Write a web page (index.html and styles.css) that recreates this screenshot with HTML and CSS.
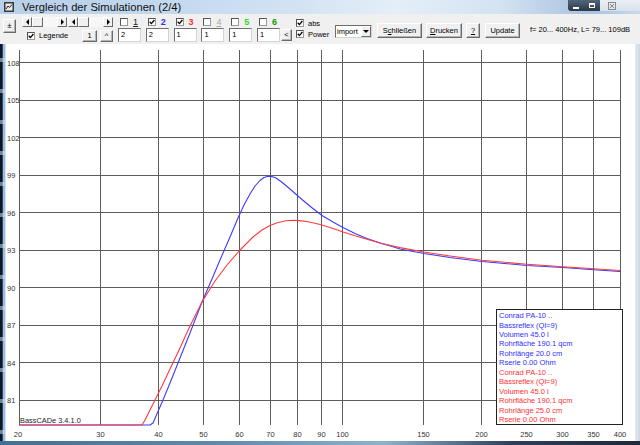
FILE: index.html
```html
<!DOCTYPE html>
<html>
<head>
<meta charset="utf-8">
<title>Vergleich der Simulationen</title>
<link rel="stylesheet" href="styles.css">
</head>
<body>
<div class="window">
  <div class="titlebar">
    <svg class="appicon" viewBox="0 0 10 10"><rect x="0" y="0" width="10" height="10" fill="#3a3a3a"/><rect x="1.5" y="1.5" width="7" height="7" fill="#e8e8e8"/><path d="M2 7 L4 4 L5.5 5.5 L8 2.5" stroke="#222" stroke-width="1" fill="none"/></svg>
    <span class="title">Vergleich der Simulationen (2/4)</span>
    <div class="caption">
      <div class="cap-mm"><span class="cap-min"></span><span class="cap-max"></span></div>
      <div class="cap-close"><svg viewBox="0 0 8 8"><rect x="0.5" y="0.5" width="7" height="7" fill="none" stroke="#8a8a8a"/><path d="M2 2 L6 6 M6 2 L2 6" stroke="#8a8a8a" stroke-width="1"/></svg></div>
    </div>
  </div>

  <div class="toolbar">
    <button class="btn btn-pm">±</button>
    <div class="nav">
      <div class="nav-row1">
        <div class="scroll"><span class="sb-arrow"><i class="tri-l"></i></span><span class="sb-thumb"></span><span class="sb-track"></span><span class="sb-arrow"><i class="tri-r"></i></span></div>
        <div class="scroll"><span class="sb-arrow"><i class="tri-l"></i></span><span class="sb-thumb"></span><span class="sb-track"></span><span class="sb-arrow"><i class="tri-r"></i></span></div>
      </div>
      <div class="nav-row2">
        <label class="legende"><span class="chk"><svg viewBox="0 0 6 6"><path d="M0.7 2.8 L2.4 4.6 L5.4 1" stroke="#000" stroke-width="1.3" fill="none"/></svg></span>Legende</label>
        <button class="btn btn-one">1</button>
        <button class="btn btn-up">^</button>
      </div>
    </div>

    <div class="channels">
      <div class="ch-head"><span class="chk"></span><span class="num n1">1</span></div>
      <div class="ch-head"><span class="chk"><svg viewBox="0 0 6 6"><path d="M0.7 2.8 L2.4 4.6 L5.4 1" stroke="#000" stroke-width="1.3" fill="none"/></svg></span><span class="num n2">2</span></div>
      <div class="ch-head"><span class="chk"><svg viewBox="0 0 6 6"><path d="M0.7 2.8 L2.4 4.6 L5.4 1" stroke="#000" stroke-width="1.3" fill="none"/></svg></span><span class="num n3">3</span></div>
      <div class="ch-head"><span class="chk"></span><span class="num n4">4</span></div>
      <div class="ch-head"><span class="chk"></span><span class="num n5">5</span></div>
      <div class="ch-head"><span class="chk"></span><span class="num n6">6</span></div>
      <div class="tb">2</div>
      <div class="tb">2</div>
      <div class="tb">1</div>
      <div class="tb">1</div>
      <div class="tb">1</div>
      <div class="tb">1</div>
    </div>

    <button class="btn btn-lt">&lt;</button>

    <div class="opts">
      <label class="opt"><span class="chk"><svg viewBox="0 0 6 6"><path d="M0.7 2.8 L2.4 4.6 L5.4 1" stroke="#000" stroke-width="1.3" fill="none"/></svg></span>abs</label>
      <label class="opt"><span class="chk"><svg viewBox="0 0 6 6"><path d="M0.7 2.8 L2.4 4.6 L5.4 1" stroke="#000" stroke-width="1.3" fill="none"/></svg></span>Power</label>
    </div>

    <div class="combo"><span class="combo-text">import</span><span class="combo-btn"><i class="tri-d"></i></span></div>

    <button class="btn btn-cmd b-close">S<u>c</u>hließen</button>
    <button class="btn btn-cmd b-print"><u>D</u>rucken</button>
    <button class="btn btn-cmd b-help"><u>?</u></button>
    <button class="btn btn-cmd b-update">Update</button>

    <span class="range">f= 20... 400Hz, L= 79... 109dB</span>
  </div>

  <div class="main">
    <div class="frame-l"></div>
    <div class="chart">
      <svg class="plot" width="629" height="397" viewBox="6 44 629 397">
        <g class="grid" stroke="#5c5c5c" stroke-width="1" shape-rendering="crispEdges" fill="none">
          <path d="M19.5 50V425 M100.5 50V425 M158.5 50V425 M203.5 50V425 M239.5 50V425 M270.5 50V425 M297.5 50V425 M321.5 50V425 M342.5 50V425 M423.5 50V425 M481.5 50V425 M526.5 50V425 M562.5 50V425 M593.5 50V425 M620.5 50V425"/>
          <path d="M19 62.5H621 M19 100.5H621 M19 137.5H621 M19 175.5H621 M19 212.5H621 M19 250.5H621 M19 287.5H621 M19 325.5H621 M19 362.5H621 M19 400.5H621"/>
        </g>
        <g class="ylab" font-family="Liberation Sans, Arial, sans-serif" font-size="7.5" fill="#333">
          <text x="7" y="65.5">108</text>
          <text x="7" y="103">105</text>
          <text x="7" y="140.5">102</text>
          <text x="7" y="178">99</text>
          <text x="7" y="215.5">96</text>
          <text x="7" y="253">93</text>
          <text x="7" y="290.5">90</text>
          <text x="7" y="328">87</text>
          <text x="7" y="365.5">84</text>
          <text x="7" y="403">81</text>
        </g>
        <g class="xlab" font-family="Liberation Sans, Arial, sans-serif" font-size="7.5" fill="#333" text-anchor="middle">
          <text x="18" y="437">20</text>
          <text x="100.5" y="437">30</text>
          <text x="158.5" y="437">40</text>
          <text x="203.5" y="437">50</text>
          <text x="239.5" y="437">60</text>
          <text x="270.5" y="437">70</text>
          <text x="297.5" y="437">80</text>
          <text x="321.5" y="437">90</text>
          <text x="342.5" y="437">100</text>
          <text x="423.5" y="437">150</text>
          <text x="481.5" y="437">200</text>
          <text x="526.5" y="437">250</text>
          <text x="562.5" y="437">300</text>
          <text x="593.5" y="437">350</text>
          <text x="620" y="437">400</text>
        </g>
        <polyline fill="none" stroke="#3b3bff" stroke-width="1.1" stroke-linejoin="round" points="19,425 150,425 153,423 156,416 163,400 170,383 180,358 190,333 202,302 212,279 220,260 230,237 238,218 244,205 250,194 255,186 260,180.5 264,177.5 268,176.3 272,176.6 276,178 281,181.5 287,186.5 294,192.5 302,199.5 311,207 322,215.5 333,222 343,227.5 355,233.5 367,238.5 380,243 392,246.5 400,249 424,253.5 450,257.5 482,261.5 527,265.5 563,267.5 590,269.5 620,271.5"/>
        <polyline fill="none" stroke="#ff3b3b" stroke-width="1.1" stroke-linejoin="round" points="19,425 142,425 144.5,421 148,414 155,400 162,386 170,369 180,348 190,326 202,302 215,281 227,265 240,250 253,237 262,230 270,225.5 278,222.5 286,220.8 293,220.3 300,220.6 308,221.8 316,223.5 322,225 333,228.5 343,232 355,235.8 367,239.3 380,243 392,245.8 400,247.6 424,252 450,256 482,260.3 527,264.3 563,266.7 590,268.5 620,270.5"/>
        <text x="20" y="423" font-family="Liberation Sans, Arial, sans-serif" font-size="7.4" fill="#222">BassCADe 3.4.1.0</text>
        <rect x="496.5" y="309.5" width="126" height="115" fill="#fff" stroke="#222" stroke-width="1" shape-rendering="crispEdges"/>
        <g font-family="Liberation Sans, Arial, sans-serif" font-size="7.5">
          <g fill="#3030ff">
            <text x="499" y="318">Conrad PA-10 ..</text>
            <text x="499" y="327.5">Bassreflex (Ql=9)</text>
            <text x="499" y="337">Volumen 45.0 l</text>
            <text x="499" y="346.4">Rohrfläche 190.1 qcm</text>
            <text x="499" y="355.8">Rohrlänge 20.0 cm</text>
            <text x="499" y="365.3">Rserie 0.00 Ohm</text>
          </g>
          <g fill="#ff3030">
            <text x="499" y="374.7">Conrad PA-10 ..</text>
            <text x="499" y="384.2">Bassreflex (Ql=9)</text>
            <text x="499" y="393.6">Volumen 45.0 l</text>
            <text x="499" y="403">Rohrfläche 190.1 qcm</text>
            <text x="499" y="412.5">Rohrlänge 25.0 cm</text>
            <text x="499" y="422">Rserie 0.00 Ohm</text>
          </g>
        </g>
      </svg>
    </div>
    <div class="frame-r"></div>
  </div>
  <div class="frame-b"></div>
</div>
</body>
</html>
```

FILE: styles.css
```css
html, body {
  margin: 0;
  padding: 0;
}
body {
  width: 640px;
  height: 445px;
  overflow: hidden;
  background: #f0f0f0;
  font-family: "Liberation Sans", Arial, sans-serif;
  font-size: 7.5px;
  color: #000;
}
.window {
  width: 640px;
  height: 445px;
  display: flex;
  flex-direction: column;
}

/* ---------- title bar ---------- */
.titlebar {
  height: 14px;
  flex: none;
  display: flex;
  align-items: center;
  background: linear-gradient(90deg, #b7cfe8 0%, #c3d8ee 25%, #d2e2f3 45%, #e4eef8 62%, #d4e3f2 78%, #a8c2de 92%, #c9d9ea 100%);
}
.appicon {
  width: 10px;
  height: 10px;
  margin-left: 4px;
  flex: none;
}
.title {
  margin-left: 8px;
  font-family: "Liberation Sans", Arial, sans-serif;
  font-size: 11.2px;
  line-height: 14px;
  color: #111;
  white-space: nowrap;
}
.caption {
  margin-left: auto;
  align-self: flex-start;
  display: flex;
  height: 12px;
}
.cap-mm {
  width: 32px;
  height: 11px;
  display: flex;
  align-items: center;
  justify-content: space-around;
  background: linear-gradient(180deg, #52657a, #2c3a4a);
  border-radius: 0 0 0 3px;
}
.cap-min {
  width: 6px;
  height: 2px;
  margin-top: 4px;
  background: #fff;
}
.cap-max {
  width: 6px;
  height: 5px;
  border: 1px solid #fff;
  border-top-width: 2px;
  box-sizing: border-box;
}
.cap-close {
  width: 40px;
  height: 11px;
  display: flex;
  align-items: center;
  justify-content: flex-start;
  padding-left: 8px;
  box-sizing: border-box;
  background: linear-gradient(180deg, #e9eef3, #d8e2ec);
}
.cap-close svg {
  width: 8px;
  height: 8px;
}

/* ---------- toolbar ---------- */
.toolbar {
  height: 30px;
  flex: none;
  display: flex;
  align-items: flex-start;
  background: #f0f0f0;
}
.btn {
  box-sizing: border-box;
  margin: 0;
  padding: 0;
  font-family: "Liberation Sans", Arial, sans-serif;
  font-size: 7.5px;
  line-height: 1;
  color: #000;
  background: #f0f0f0;
  border: 1px solid;
  border-color: #ffffff #6a6a6a #6a6a6a #ffffff;
  box-shadow: inset -1px -1px 0 #b4b4b4;
  display: flex;
  align-items: center;
  justify-content: center;
  flex: none;
}
.btn u {
  text-decoration: underline;
}
.btn-pm {
  width: 13px;
  height: 14px;
  margin: 5px 0 0 3px;
  font-size: 8px;
}
.nav {
  width: 91px;
  margin-left: 6px;
  display: flex;
  flex-direction: column;
  flex: none;
}
.nav-row1 {
  margin-top: 3px;
  height: 10px;
  display: flex;
  gap: 1px;
}
.scroll {
  width: 45px;
  height: 10px;
  display: flex;
}
.sb-arrow, .sb-thumb {
  box-sizing: border-box;
  width: 10px;
  height: 10px;
  background: #f0f0f0;
  border: 1px solid;
  border-color: #ffffff #6a6a6a #6a6a6a #ffffff;
  display: flex;
  align-items: center;
  justify-content: center;
  flex: none;
}
.sb-thumb {
  width: 11px;
}
.sb-track {
  flex: 1;
  height: 10px;
  background: #f7f7f7;
}
.tri-l, .tri-r, .tri-d {
  display: block;
  width: 0;
  height: 0;
}
.tri-l {
  border-top: 3px solid transparent;
  border-bottom: 3px solid transparent;
  border-right: 3px solid #000;
}
.tri-r {
  border-top: 3px solid transparent;
  border-bottom: 3px solid transparent;
  border-left: 3px solid #000;
}
.tri-d {
  border-left: 3px solid transparent;
  border-right: 3px solid transparent;
  border-top: 3px solid #000;
}
.nav-row2 {
  margin-top: 2px;
  height: 13px;
  display: flex;
  align-items: center;
}
.legende {
  width: 60px;
  padding-left: 5px;
  box-sizing: border-box;
  display: flex;
  align-items: center;
  gap: 4px;
  font-size: 7.5px;
}
.btn-one {
  width: 15px;
  height: 12px;
}
.btn-up {
  width: 13px;
  height: 12px;
  margin-left: 3px;
}
.chk {
  box-sizing: border-box;
  width: 8px;
  height: 8px;
  flex: none;
  background: #fff;
  border: 1px solid;
  border-color: #555 #9a9a9a #9a9a9a #555;
  display: inline-flex;
  align-items: center;
  justify-content: center;
}
.chk svg {
  width: 6px;
  height: 6px;
  display: block;
}

/* channels */
.channels {
  margin-left: 5px;
  display: grid;
  grid-template-columns: repeat(5, 27.8px) 23px;
  grid-template-rows: 10px 14px;
  row-gap: 1px;
  margin-top: 3px;
  flex: none;
}
.ch-head {
  display: flex;
  align-items: center;
  padding-left: 2px;
  gap: 5px;
}
.num {
  font-size: 9px;
  line-height: 10px;
}
.n1 { color: #222; text-decoration: underline; }
.n2 { color: #2e2eff; font-weight: bold; }
.n3 { color: #ff2e2e; font-weight: bold; }
.n4 { color: #a8a8a8; text-decoration: underline; }
.n5 { color: #22e022; font-weight: bold; }
.n6 { color: #0e9e0e; font-weight: bold; }
.tb {
  box-sizing: border-box;
  width: 23px;
  height: 14px;
  background: #fff;
  border: 1px solid;
  border-color: #6e6e6e #d4d4d4 #d4d4d4 #6e6e6e;
  padding: 1px 0 0 2px;
  font-size: 7.5px;
  line-height: 9px;
}

.btn-lt {
  width: 11px;
  height: 12px;
  margin: 15px 0 0 1px;
}

.opts {
  width: 35px;
  margin: 4px 0 0 3px;
  display: flex;
  flex-direction: column;
  gap: 1px;
  flex: none;
}
.opt {
  height: 10px;
  display: flex;
  align-items: center;
  padding-left: 1px;
  gap: 4px;
  font-size: 7.5px;
}

.combo {
  box-sizing: border-box;
  width: 37px;
  height: 13px;
  margin: 11px 0 0 5px;
  background: #fff;
  border: 1px solid;
  border-color: #6e6e6e #d4d4d4 #d4d4d4 #6e6e6e;
  display: flex;
  align-items: center;
  flex: none;
}
.combo-text {
  flex: 1;
  padding-left: 1px;
  font-size: 7.5px;
}
.combo-btn {
  box-sizing: border-box;
  width: 10px;
  height: 11px;
  background: #f0f0f0;
  border: 1px solid;
  border-color: #ffffff #6a6a6a #6a6a6a #ffffff;
  display: flex;
  align-items: center;
  justify-content: center;
}

.btn-cmd {
  height: 15px;
  margin-top: 9px;
}
.b-close { width: 45px; margin-left: 5px; }
.b-print { width: 36px; margin-left: 4px; }
.b-help { width: 14px; margin-left: 4px; }
.b-update { width: 35px; margin-left: 5px; }

.range {
  margin-left: 10px;
  align-self: center;
  font-size: 7.5px;
  white-space: nowrap;
}

/* ---------- chart ---------- */
.main {
  height: 397px;
  flex: none;
  display: flex;
}
.frame-l {
  width: 6px;
  flex: none;
  background:
    repeating-linear-gradient(180deg, rgba(255,255,255,0) 0 14px, rgba(200,225,245,0.55) 14px 18px, rgba(255,255,255,0) 18px 31px),
    linear-gradient(90deg, #0c1826 0 2px, #2c4a6e 2px 3px, #9fbcd8 3px 5px, #d5e3ef 5px 6px);
}
.chart {
  width: 629px;
  flex: none;
  background: #fff;
}
.plot {
  display: block;
}
.frame-r {
  flex: 1;
  background: linear-gradient(90deg, #e2e8ee, #cfd9e4);
}
.frame-b {
  flex: 1;
  background: linear-gradient(90deg, #3f6f95 0%, #5c8db0 35%, #8fb2cc 60%, #2d3f57 80%, #1d2a3c 100%);
}
```
